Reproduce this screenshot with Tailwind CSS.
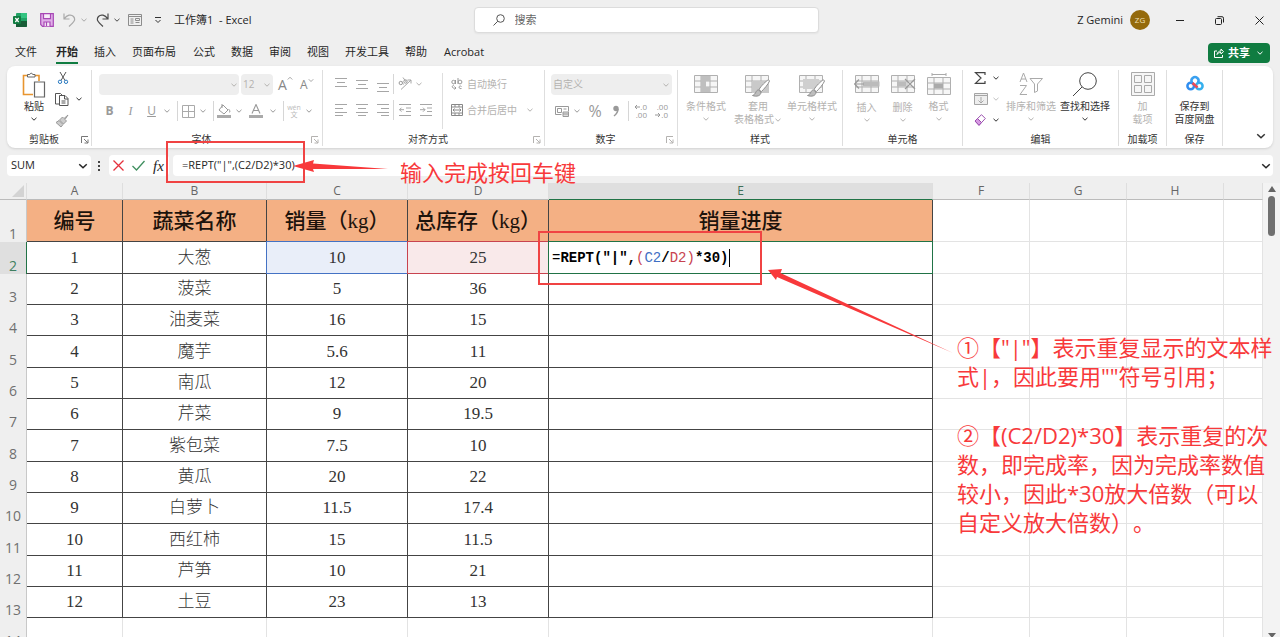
<!DOCTYPE html>
<html lang="zh-CN">
<head>
<meta charset="utf-8">
<meta name="viewport" content="width=device-width, initial-scale=1">
<title>工作簿1 - Excel</title>
<script src="https://cdn.jsdelivr.net/npm/@tailwindcss/browser@4"></script>
</head>
<body class="relative flex h-screen flex-col overflow-hidden bg-[#efefef] font-['Open_Sans','Noto_Sans_CJK_SC',sans-serif] text-[11px] text-[#262626] [text-spacing-trim:space-all]">

<!-- Shared icons -->
<svg class="hidden">
  <symbol id="chev" viewBox="0 0 8 8"><path d="M1.5 2.8 4 5.2 6.500 2.800" fill="none" stroke="currentColor"/></symbol>
  <symbol id="launch" viewBox="0 0 8 8"><path d="M.5 7V.5H7M3 3l4 4M7 3.500V7H3.500" fill="none" stroke="currentColor"/></symbol>
  <symbol id="grid" viewBox="0 0 24 20"><path d="M.5 1.500h23v17H.5zM.5 7h23M.5 13h23M7 1.500v17M16 1.500v17" fill="#f6f6f6" stroke="#b0b0b0"/></symbol>
  <symbol id="brush" viewBox="0 0 18 18"><path d="M16.500.8C14 2 9 7 7 10.500l2.300 2.200C12 10 16.500 5 17.500 2z" fill="#fff" stroke="#8e8e8e"/><path d="M6.500 11c-3 0-2 4-6 5.500 4 1.500 8.500.5 8.500-3.500z" fill="#bdbdbd" stroke="#8e8e8e"/></symbol>
</svg>

<!-- Title bar -->
<header class="flex h-10 shrink-0 items-center">
  <div class="flex flex-1 items-center pl-[13px]">
    <svg class="size-[14px]" viewBox="0 0 14 14"><rect x="3" y="0" width="11" height="14" rx="1" fill="#21a366"/><path d="M8 0h6v5H8z" fill="#33c481"/><path d="M3 8h11v5a1 1 0 0 1-1 1H3z" fill="#185c37"/><rect x="0" y="3" width="8" height="8" rx="1" fill="#107c41"/><path d="m2.300 5 3.400 4M5.700 5 2.300 9" stroke="#fff" stroke-width="1.200"/></svg>
    <button class="ml-[13px]" aria-label="保存"><svg class="size-[14px]" viewBox="0 0 14 14" fill="#e0aee8" stroke="#a748b5" stroke-width="1.200"><path d="M.7.7h12.600v12.600H2.500L.7 11.500z"/><path d="M3.500.7h7v5h-7zM4 13.300V9h6v4.300M6.500 9.500v3.500" fill="#f7ecf8"/></svg></button>
    <button class="ml-[9px] flex items-center gap-1 text-[#a9a9a9]" aria-label="撤销"><svg class="h-[14px] w-[13px]" viewBox="0 0 13 14" fill="none" stroke="currentColor" stroke-width="1.200"><path d="M1 .5V6h5.500M1.300 5.700C4 2 8 .8 10.500 3.500 13 6.500 11.500 8.500 6 13.500"/></svg><svg class="size-2"><use href="#chev"/></svg></button>
    <button class="ml-[8px] flex items-center gap-1 text-[#4a4a4a]" aria-label="恢复"><svg class="h-[14px] w-[13px]" viewBox="0 0 13 14" fill="none" stroke="currentColor" stroke-width="1.200"><path d="M12 .5V6H6.500M11.700 5.700C9 2 5 .8 2.500 3.500 0 6.500 1.500 8.500 7 13.500"/></svg><svg class="size-2"><use href="#chev"/></svg></button>
    <button class="ml-[7px]" aria-label="窗体"><svg class="h-3 w-[14px]" viewBox="0 0 14 12" fill="none" stroke="#8c8c8c"><path d="M.5.5h13v11H.5zM.5 2.500h13M2.500 5h3M2.500 7h3M2.500 9h3M7.500 4.500h4v2h-4zM7.500 8.500h4"/></svg></button>
    <button class="ml-3 text-[#333]" aria-label="自定义快速访问工具栏"><svg class="size-2" viewBox="0 0 8 8" fill="none" stroke="currentColor"><path d="M1 1.500h6M1.500 4 4 6.500 6.500 4"/></svg></button>
    <span class="ml-3">工作簿1 &nbsp;- Excel</span>
  </div>
  <label class="ml-[14px] flex h-[26px] w-[345px] items-center gap-[10px] rounded border border-[#dcdcdc] bg-white px-[18px] text-[#666] shadow-xs">
    <svg class="size-3" viewBox="0 0 12 12" fill="none" stroke="#555"><circle cx="7.500" cy="4.500" r="3.800"/><path d="M4.800 7.200.5 11.500"/></svg>
    <input class="min-w-0 flex-1 text-[11px] outline-none placeholder:text-[#666]" placeholder="搜索" aria-label="搜索">
  </label>
  <div class="flex flex-1 items-center justify-end pr-[15px]">
    <span class="text-[11px]">Z Gemini</span>
    <button class="ml-[7px] size-5 rounded-full bg-[#946a0c] text-[8px] text-[#f0e0b8]">ZG</button>
    <button class="ml-[25px] p-px" aria-label="最小化"><svg class="size-2" viewBox="0 0 8 8" stroke="#222"><path d="M0 4.500h8"/></svg></button>
    <button class="ml-[29px] p-px" aria-label="还原"><svg class="size-[9px]" viewBox="0 0 9 9" fill="none" stroke="#222"><rect x=".5" y="2.500" width="6" height="6" rx="1"/><path d="M2.500.7H7a1.500 1.500 0 0 1 1.500 1.500v4.300"/></svg></button>
    <button class="ml-[29px] p-px" aria-label="关闭"><svg class="size-[9px]" viewBox="0 0 9 9" stroke="#222"><path d="m.5.500 8 8M8.500.5l-8 8"/></svg></button>
  </div>
</header>

<!-- Tabs -->
<nav class="flex h-[26px] shrink-0 items-center pl-[15px] pr-[10px]">
  <div class="flex flex-1 gap-4 [&>a]:leading-5">
    <a href="#" class="mr-[3px]">文件</a><a href="#" class="border-b-2 border-[#107c41] font-bold">开始</a><a href="#">插入</a><a href="#">页面布局</a><a href="#" class="ml-px">公式</a><a href="#">数据</a><a href="#">审阅</a><a href="#">视图</a><a href="#">开发工具</a><a href="#">帮助</a><a href="#" class="ml-px">Acrobat</a>
  </div>
  <button class="flex h-5 items-center rounded bg-[#107c41] px-[6px] text-[11px] font-bold text-white">
    <svg class="mr-1 size-[10px]" viewBox="0 0 10 10" fill="none" stroke="#fff"><path d="M3 3H.5v6.500h8V7M3 6.500C3.500 4 5 3 7 3V1l2.500 2.700L7 6V4.500C5 4.500 4 5 3 6.500z"/></svg>共享<svg class="ml-[6px] size-2"><use href="#chev"/></svg>
  </button>
</nav>

<!-- Ribbon -->
<section class="mx-[7px] flex h-[82px] shrink-0 rounded-lg bg-white pb-[2px] pt-1 text-[10px] leading-[13px] text-[#b4b2b0] shadow [&_svg]:shrink-0 [&>div]:flex [&>div]:flex-col [&>div]:border-r [&>div]:border-[#dedede] [&_h2]:flex-1 [&_h2]:text-center [&_h2]:text-[#333]">

  <div class="w-[85px] text-[#333]">
    <div class="flex h-16">
      <button class="ml-3 flex w-[30px] flex-col items-center pt-[2px]">
        <svg class="h-[26px] w-6" viewBox="0 0 24 26" fill="none"><path d="M17 9V3.500H1.500v19H11" stroke="#e8952f" stroke-width="1.600"/><path d="M5.500 5V2.500h2.300C8 .8 10.500.8 10.700 2.500H13V5z" fill="#fff" stroke="#666"/><path d="M12.500 10h10v15h-10z" fill="#fff" stroke="#666" stroke-width="1.200"/></svg>
        <span class="mt-[2px]">粘贴</span><svg class="mt-[2px] size-2"><use href="#chev"/></svg>
      </button>
      <div class="ml-[6px] flex flex-col gap-2 pt-[2px]">
        <button aria-label="剪切"><svg class="ml-[2px] size-3" viewBox="0 0 12 12" fill="none"><path d="m3 0 5 8.500M9 0 4 8.500" stroke="#555"/><circle cx="3" cy="9.800" r="1.700" stroke="#2a7ac0"/><circle cx="9" cy="9.800" r="1.700" stroke="#2a7ac0"/></svg></button>
        <button class="flex items-center gap-[6px]" aria-label="复制"><svg class="size-[14px]" viewBox="0 0 14 14" fill="none" stroke="#555"><path d="M4.500 12H.5V1.500h5l1.500 1.500M4.500 3.500H10l3 3v7H4.500zM9.500 3.500V7H13M6.500 9h4M6.500 11h4"/></svg><svg class="size-2"><use href="#chev"/></svg></button>
        <button aria-label="格式刷"><svg class="size-[14px]" viewBox="0 0 14 14" fill="#ccc" stroke="#999"><path d="m13 1-4 3.500L7.500 3 4.500 6l4 4 3-3L10 5.500zM4 6.500l-3 2 5 4.500 2-2.500z"/></svg></button>
      </div>
    </div>
    <footer class="flex items-center"><h2>剪贴板</h2><button aria-label="剪贴板设置"><svg class="mr-[2px] size-2 text-[#777]"><use href="#launch"/></svg></button></footer>
  </div>

  <div class="w-[231px]">
    <div class="h-16 pl-[7px] pt-1">
      <div class="flex items-center">
        <button class="flex h-[21px] w-[140px] items-center justify-end rounded bg-[#eeeeee] pr-px" aria-label="字体"><svg class="size-2"><use href="#chev"/></svg></button>
        <button class="ml-[2px] flex h-[21px] w-8 items-center justify-between rounded bg-[#eeeeee] px-[2px]">12<svg class="size-2"><use href="#chev"/></svg></button>
        <button class="ml-[5px] flex w-[18px] text-sm text-[#888]" aria-label="增大字号">A<svg class="size-[6px]" viewBox="0 0 8 8"><path d="M1 6 4 3l3 3" fill="none" stroke="#888"/></svg></button>
        <button class="ml-1 flex w-4 text-xs text-[#888]" aria-label="减小字号">A<svg class="size-[6px]" viewBox="0 0 8 8"><path d="m1 3 3 3 3-3" fill="none" stroke="#888"/></svg></button>
      </div>
      <div class="mt-[6px] flex h-5 items-center text-xs text-[#9a9a9a] [&>button]:flex [&>button]:justify-center">
        <button class="w-[21px] font-bold">B</button><button class="w-[21px] font-['Liberation_Serif',serif] italic">I</button><button class="w-[21px] underline">U</button>
        <button class="w-[10px]" aria-label="下划线"><svg class="size-2"><use href="#chev"/></svg></button>
        <i class="ml-[5px] h-5 w-px bg-[#d6d6d6]"></i>
        <button class="w-5" aria-label="边框"><svg class="size-[13px]" viewBox="0 0 13 13" fill="none" stroke="#aaa"><path d="M.5.500h12v12H.5zM6.500.5v12M.5 6.500h12"/></svg></button>
        <button class="w-[10px]" aria-label="边框选项"><svg class="size-2"><use href="#chev"/></svg></button>
        <i class="ml-[5px] h-5 w-px bg-[#d6d6d6]"></i>
        <button class="w-5" aria-label="填充颜色"><svg class="size-[14px]" viewBox="0 0 14 14" fill="none" stroke="#999"><path d="m6 1 5 5-4 4-5-4zM5 0v4M11.500 5c2 2 1.500 3 .5 3.500"/><path d="M0 11h14v3H0z" fill="#aaa" stroke="none"/></svg></button>
        <button class="w-[10px]" aria-label="填充选项"><svg class="size-2"><use href="#chev"/></svg></button>
        <button class="w-6" aria-label="字体颜色"><svg class="size-[14px]" viewBox="0 0 14 14" fill="none" stroke="#999" stroke-width="1.100"><path d="M3 9.500 7 .5l4 9M4.500 6.500h5"/><path d="M0 11h14v3H0z" fill="#aaa" stroke="none"/></svg></button>
        <button class="w-[10px]" aria-label="颜色选项"><svg class="size-2"><use href="#chev"/></svg></button>
        <i class="ml-[5px] h-5 w-px bg-[#d6d6d6]"></i>
        <button class="w-5 flex-col items-center text-[7px] leading-[7px] text-[#bbb]"><span>wén</span><span>文</span></button>
        <button class="w-[10px]" aria-label="拼音选项"><svg class="size-2"><use href="#chev"/></svg></button>
      </div>
    </div>
    <footer class="flex items-center"><h2>字体</h2><button aria-label="字体设置"><svg class="mr-[3px] size-2"><use href="#launch"/></svg></button></footer>
  </div>

  <div class="w-[222px]">
    <div class="flex h-16 pl-[7px] pt-[3px]">
      <div class="h-14 w-[113px] border-r border-[#dedede]">
        <div class="flex h-[22px] items-center [&>button]:flex [&>button]:w-[21px] [&>button]:justify-center [&_path]:stroke-[#a6a6a6] [&_circle]:stroke-[#999]">
          <button aria-label="顶端对齐"><svg class="h-4 w-3" viewBox="0 0 12 16"><path d="M0 2.500h12M2 6.500h8M0 10.500h12"/></svg></button>
          <button aria-label="垂直居中"><svg class="h-4 w-3" viewBox="0 0 12 16"><path d="M0 4.500h12M2 8.500h8M0 12.500h12"/></svg></button>
          <button aria-label="底端对齐"><svg class="h-4 w-3" viewBox="0 0 12 16"><path d="M0 7.500h12M2 11.500h8M0 15.500h12"/></svg></button>
          <i class="h-5 w-px bg-[#d6d6d6]"></i>
          <button aria-label="方向"><svg class="size-[14px]" viewBox="0 0 14 14" fill="none"><path d="M3 12.500 13 3M9.500 3H13v3.500"/><circle cx="2.800" cy="6" r="1.700"/><circle cx="7.500" cy="4.500" r="1.700"/><path d="m3.500 4 2 3.500M5 .5l3.500 5"/></svg></button>
          <svg class="size-2"><use href="#chev"/></svg>
        </div>
        <div class="mt-1 flex h-[22px] items-center [&>button]:flex [&>button]:w-[21px] [&>button]:justify-center [&_path]:stroke-[#a6a6a6]">
          <button aria-label="左对齐"><svg class="size-3" viewBox="0 0 12 12"><path d="M0 .5h12M0 4.500h8M0 8.500h12M0 11.500h8"/></svg></button>
          <button aria-label="居中"><svg class="size-3" viewBox="0 0 12 12"><path d="M0 .5h12M2 4.500h8M0 8.500h12M2 11.500h8"/></svg></button>
          <button aria-label="右对齐"><svg class="size-3" viewBox="0 0 12 12"><path d="M0 .5h12M4 4.500h8M0 8.500h12M4 11.500h8"/></svg></button>
          <i class="h-5 w-px bg-[#d6d6d6]"></i>
          <button aria-label="减少缩进"><svg class="size-3" viewBox="0 0 12 12" fill="none"><path d="M0 .5h12M7 4h5M7 7.500h5M0 11.500h12M5 5.700H.5M2.500 3.700l-2 2 2 2"/></svg></button>
          <button aria-label="增加缩进"><svg class="size-3" viewBox="0 0 12 12" fill="none"><path d="M0 .5h12M7 4h5M7 7.500h5M0 11.500h12M0 5.700h5M3 3.700l2 2-2 2"/></svg></button>
        </div>
      </div>
      <div class="pl-2">
        <button class="flex h-[22px] items-center gap-1"><svg class="size-3" viewBox="0 0 12 12" fill="none" stroke="#999"><circle cx="2.500" cy="4" r="1.700"/><path d="M4.500 2v4M7 0v6M10.500 8.500c-3-2-3.500 3 0 2M3 7c-3 1-2 4 2 3M3.500 8.500 5 10l-1.500 1.500"/><circle cx="9" cy="4" r="1.900"/></svg>自动换行</button>
        <button class="mt-1 flex h-[22px] items-center gap-1"><svg class="size-3" viewBox="0 0 12 12" fill="none" stroke="#888"><path d="M.5.500h11v11H.5zM.5 3h11M.5 9h11M4 .5V3M8 .5V3M4 9v2.500M8 9v2.500M2 6h8M3.500 4.500 2 6l1.500 1.500M8.500 4.500 10 6 8.500 7.500"/></svg>合并后居中<svg class="ml-[5px] size-2"><use href="#chev"/></svg></button>
      </div>
    </div>
    <footer class="flex items-center"><h2>对齐方式</h2><button aria-label="对齐设置"><svg class="mr-[3px] size-2"><use href="#launch"/></svg></button></footer>
  </div>

  <div class="w-[133px]">
    <div class="h-16 pl-[6px] pt-1">
      <button class="flex h-[21px] w-[121px] items-center justify-between rounded bg-[#eeeeee] px-[2px]">自定义<svg class="size-2"><use href="#chev"/></svg></button>
      <div class="mt-[6px] flex h-5 items-center text-[#999] [&>button]:flex [&>button]:justify-center">
        <button class="w-[21px]" aria-label="会计格式"><svg class="h-3 w-[14px]" viewBox="0 0 14 12" fill="none" stroke="#999"><path d="M.5 1.500h13v5M.5 1.500v8h6M2.500 3.500h4v4h-4zM8.500 4h3"/><path d="M8 7h5.500v4.500H8zM8 9h5.500" fill="#ddd"/></svg></button>
        <button class="w-[10px]" aria-label="会计选项"><svg class="size-2"><use href="#chev"/></svg></button>
        <button class="w-[26px] text-base leading-5">%</button>
        <button class="w-4" aria-label="千位分隔"><svg class="h-3 w-2" viewBox="0 0 8 12"><circle cx="4" cy="3.500" r="2.700" fill="#999"/><path d="M6 4C6 7 4.500 9 2 11" fill="none" stroke="#999" stroke-width="1.500"/></svg></button>
        <i class="ml-1 h-5 w-px bg-[#d6d6d6]"></i>
        <button class="w-[22px] flex-col items-end pr-1 text-[8px] leading-[8px]"><span class="flex items-center"><svg class="size-[6px]" viewBox="0 0 6 6" fill="none" stroke="#999"><path d="M6 3H1M3 1 1 3l2 2"/></svg>.0</span><span>.00</span></button>
        <button class="w-[21px] flex-col items-end pr-1 text-[8px] leading-[8px]"><span>.00</span><span class="flex items-center"><svg class="size-[6px]" viewBox="0 0 6 6" fill="none" stroke="#999"><path d="M0 3h5M3 1l2 2-2 2"/></svg>.0</span></button>
      </div>
    </div>
    <footer class="flex items-center"><h2>数字</h2><button aria-label="数字设置"><svg class="mr-[3px] size-2"><use href="#launch"/></svg></button></footer>
  </div>

  <div class="w-[165px]">
    <div class="flex h-16 pl-[2px] pt-[3px] [&>button]:flex [&>button]:w-[52px] [&>button]:flex-col [&>button]:items-center">
      <button><svg class="mb-[3px] h-6 w-6" viewBox="0 -1 24 24"><use href="#grid" width="24" height="20"/><path d="M7 2h9v5H7zM7 7h5v6H7zM7 13h9v5H7z" fill="#bfbfbf"/></svg>条件格式<svg class="mt-[2px] size-2"><use href="#chev"/></svg></button>
      <button><svg class="mb-[3px] h-6 w-[26px]" viewBox="0 -1 26 24"><use href="#grid" width="24" height="20"/><path d="M7 7h17v12H7z" fill="#c9c9c9"/><use href="#brush" x="7" y="5" width="18" height="18"/></svg>套用<span class="flex items-center whitespace-nowrap">表格格式<svg class="size-2"><use href="#chev"/></svg></span></button>
      <button class="ml-[2px] whitespace-nowrap"><svg class="mb-[3px] h-6 w-[26px]" viewBox="0 -1 26 24"><use href="#grid" width="24" height="20"/><path d="M4 5h16v10H4z" fill="#cfcfcf"/><use href="#brush" x="8" y="5" width="18" height="18"/></svg>单元格样式<svg class="mt-[2px] size-2"><use href="#chev"/></svg></button>
    </div>
    <footer class="flex items-center"><h2>样式</h2></footer>
  </div>

  <div class="w-[120px]">
    <div class="flex h-16 justify-center pt-[3px] [&>button]:flex [&>button]:w-9 [&>button]:flex-col [&>button]:items-center">
      <button><svg class="mb-1 h-6 w-[26px]" viewBox="0 -1 26 24"><use href="#grid" x="1" width="24" height="20"/><path d="M9 7.500h16.500v5H9z" fill="#bbb"/><path d="M10 10H1M5 5.500.7 10 5 14.500" fill="none" stroke="#999" stroke-width="1.200"/></svg>插入<svg class="mt-[2px] size-2"><use href="#chev"/></svg></button>
      <button><svg class="mb-1 h-6 w-[26px]" viewBox="0 -1 26 24"><use href="#grid" x="1" width="24" height="20"/><path d="M7 7.500h9v5H7z" fill="#bbb"/><path d="m15 5 10 10M25 5 15 15" stroke="#999" stroke-width="1.200"/></svg>删除<svg class="mt-[2px] size-2"><use href="#chev"/></svg></button>
      <button><svg class="mb-[3px] h-6 w-6" viewBox="0 -3 24 24"><use href="#grid" width="24" height="20"/><path d="M7 7.500h9v5H7z" fill="#aaa"/><path d="M5-1.500h14M5-3v3M19-3v3" stroke="#aaa"/></svg>格式<svg class="mt-[2px] size-2"><use href="#chev"/></svg></button>
    </div>
    <footer class="flex items-center"><h2>单元格</h2></footer>
  </div>

  <div class="w-[156px]">
    <div class="flex h-16 pl-[11px] pt-[2px]">
      <div class="flex w-[30px] flex-col gap-[9px] [&>button]:flex [&>button]:items-center [&>button]:justify-between [&>button]:pr-1 [&_svg]:text-[#333]">
        <button aria-label="自动求和"><svg class="size-3" viewBox="0 0 12 12" fill="none" stroke="#444" stroke-width="1.200"><path d="M11 3V.7H1.500L7 6l-5.500 5.300H11V9"/></svg><svg class="size-2"><use href="#chev"/></svg></button>
        <button aria-label="填充"><svg class="h-3 w-[14px]" viewBox="0 0 14 12" fill="#eee" stroke="#a5a5a5"><path d="M.5.500h13v11H.5zM.5 2.500h13M7 4v6M4.500 7.500 7 10l2.500-2.500"/></svg><svg class="size-2 opacity-30"><use href="#chev"/></svg></button>
        <button aria-label="清除"><svg class="size-3" viewBox="0 0 12 12" fill="#fff" stroke="#9a4fae"><path d="M7.500.7 11.300 4.500 5 11.300 1 7z"/><path d="m3.500 4.500 4 4L5 11.300 1 7z" fill="#d79ae3"/></svg><svg class="size-2"><use href="#chev"/></svg></button>
      </div>
      <button class="flex w-[54px] flex-col items-center whitespace-nowrap"><svg class="mb-1 h-6 w-6" viewBox="0 0 24 24" fill="none" stroke="#aaa"><path d="m1 10 3.500-9L8 10M2 7h5M1 13.500h6.500L1 22.500h7M11 6.500h12.500L18.500 12v7l-3 1.500V12z"/></svg>排序和筛选<svg class="mt-[2px] size-2"><use href="#chev"/></svg></button>
      <button class="flex w-[54px] flex-col items-center whitespace-nowrap text-[#333]"><svg class="mb-1 h-6 w-6" viewBox="0 0 24 24" fill="none" stroke="#444"><circle cx="15" cy="9" r="8.300"/><path d="M9 15 0 24"/></svg>查找和选择<svg class="mt-[2px] size-2"><use href="#chev"/></svg></button>
    </div>
    <footer class="flex items-center"><h2>编辑</h2></footer>
  </div>

  <div class="w-12">
    <div class="flex h-16 justify-center pt-[2px]">
      <button class="flex w-10 flex-col items-center"><svg class="mb-1 h-6 w-6" viewBox="0 0 24 24" fill="#f6f6f6" stroke="#aaa"><path d="M.5.500h23v23H.5zM3.500 3.500h7v7h-7zM13.500 3.500h7v7h-7zM3.500 13.500h7v7h-7zM13.500 13.500h7v7h-7z"/></svg>加<br>载项</button>
    </div>
    <footer class="flex items-center"><h2>加载项</h2></footer>
  </div>

  <div class="w-14">
    <div class="flex h-16 justify-center pt-[2px] text-[#333]">
      <button class="flex flex-col items-center"><svg class="mb-1 h-6 w-[18px]" viewBox="0 0 18 24" fill="none" stroke-width="2.500"><circle cx="4.700" cy="14" r="3.300" stroke="#2f8df0"/><circle cx="13.300" cy="14" r="3.300" stroke="#35b0ee"/><path d="M6 10.500a3.500 3.500 0 1 1 6 0" stroke="#3aa0f0"/><path d="m6.500 11 5 4.500" stroke="#ee4a56"/></svg>保存到<br>百度网盘</button>
    </div>
    <footer class="flex items-center"><h2>保存</h2></footer>
  </div>

  <button class="flex flex-1 items-end justify-end pb-1 pr-[6px] text-[#333]" aria-label="折叠功能区"><svg class="size-3"><use href="#chev"/></svg></button>
</section>

<!-- Formula bar -->
<section class="flex h-[35px] shrink-0 items-center pl-[7px] pr-[7px]">
  <div class="flex h-[21px] w-[84px] items-center rounded bg-white pl-1 pr-[2px]"><input class="min-w-0 flex-1 text-[11px] outline-none" value="SUM" aria-label="名称框"><button aria-label="名称列表"><svg class="size-3"><use href="#chev"/></svg></button></div>
  <svg class="ml-[7px] h-3 w-[3px]" viewBox="0 0 3 12" fill="#444"><path d="M0 1h2v2H0zM0 5h2v2H0zM0 9h2v2H0z"/></svg>
  <div class="ml-2 flex h-[21px] w-[60px] items-center gap-2 rounded bg-white pl-1">
    <button aria-label="取消"><svg class="size-[11px]" viewBox="0 0 11 11"><path d="m.5.500 10 10M10.500.5l-10 10" fill="none" stroke="#e5303c" stroke-width="1.300"/></svg></button>
    <button aria-label="输入"><svg class="h-[11px] w-[13px]" viewBox="0 0 13 11"><path d="M.5 6 4.500 10 12.500 1" fill="none" stroke="#3f8f5f" stroke-width="1.300"/></svg></button>
    <button class="font-['Liberation_Serif',serif] text-[15px] italic leading-4">fx</button>
  </div>
  <div class="ml-1 flex h-[21px] flex-1 items-center rounded bg-white pl-[9px] pr-px"><input class="min-w-0 flex-1 text-[11px] outline-none" value='=REPT("|",(C2/D2)*30)' aria-label="编辑栏"><button aria-label="展开编辑栏"><svg class="size-3"><use href="#chev"/></svg></button></div>
</section>

<!-- Sheet -->
<main class="flex min-h-0 flex-1 overflow-hidden">
  <div class="min-w-0 flex-1 overflow-hidden">
  <table class="w-full table-fixed border-separate border-spacing-0 text-center font-['Liberation_Serif','Noto_Sans_CJK_SC',serif] text-[17px] font-light leading-5 text-[#333] [&_td]:border-b [&_td]:border-r [&_td]:border-[#e3e3e3] [&_td]:p-0 [&_td:nth-child(-n+6)]:border-[#444] [&_tbody_th]:border-r [&_tbody_th]:border-[#c8c8c8] [&_tbody_th]:p-0 [&_tbody_th]:align-bottom [&_tbody_th]:font-['Open_Sans',sans-serif] [&_tbody_th]:text-sm [&_tbody_th]:font-normal [&_tbody_th]:leading-4 [&_tbody_th]:text-[#707070]">
    <colgroup><col class="w-[27px]"><col class="w-24"><col class="w-36"><col class="w-[141px]"><col class="w-[141px]"><col class="w-96"><col class="w-[97px]"><col class="w-[97px]"><col class="w-[97px]"><col></colgroup>
    <thead class="font-['Open_Sans',sans-serif] text-xs leading-4 text-[#666] [&_th]:h-4 [&_th]:border-b [&_th]:border-r [&_th]:border-b-[#bbb] [&_th]:border-r-[#dedede] [&_th]:p-0 [&_th]:font-normal">
      <tr><th aria-label="全选"><svg class="ml-3 size-3" viewBox="0 0 12 12"><path d="M12 0v12H0z" fill="#d3d3d3"/></svg></th><th>A</th><th>B</th><th>C</th><th>D</th><th class="border-b-[#217346]! bg-[#dfdfdf] text-[#3f6f58]">E</th><th>F</th><th>G</th><th>H</th><th></th></tr>
    </thead>
    <tbody class="bg-white [&_th]:bg-[#efefef]">
      <tr class="h-[42px] text-[21px] font-medium text-[#1d130c] [&>td:nth-child(-n+6)]:bg-[#f4b084]"><th>1</th><td>编号</td><td>蔬菜名称</td><td class="whitespace-nowrap">销量（kg）</td><td class="whitespace-nowrap">总库存（kg）</td><td>销量进度</td><td></td><td></td><td></td><td></td></tr>
      <tr class="h-8"><th class="border-[#217346]! bg-[#dfdfdf]! text-[#3f7f60]!">2</th><td>1</td><td>大葱</td>
        <td class="relative bg-[#e9eef9]">10<span class="absolute -left-px -right-px -top-px bottom-[-1px] z-10 border border-[#4472c4]"></span></td>
        <td class="relative bg-[#f9e9ea]">25<span class="absolute -inset-px z-20 border border-[#c8434f]"></span></td>
        <td class="relative whitespace-nowrap pl-[3px]! text-left font-['Liberation_Mono',monospace] text-sm font-bold text-black"><span class="absolute -inset-px z-30 border border-[#217346]"></span><span class="font-normal">=</span>REPT("|",<span class="font-normal text-[#c8434f]">(</span><span class="font-normal text-[#3f6fc4]">C2</span>/<span class="font-normal text-[#c8434f]">D2)</span>*30)<span class="ml-px inline-block h-[18px] w-px bg-black align-middle"></span></td><td></td><td></td><td></td><td></td></tr>
      <tr class="h-[31px]"><th>3</th><td>2</td><td>菠菜</td><td>5</td><td>36</td><td></td><td></td><td></td><td></td><td></td></tr>
      <tr class="h-[31px]"><th>4</th><td>3</td><td>油麦菜</td><td>16</td><td>15</td><td></td><td></td><td></td><td></td><td></td></tr>
      <tr class="h-8"><th>5</th><td>4</td><td>魔芋</td><td>5.6</td><td>11</td><td></td><td></td><td></td><td></td><td></td></tr>
      <tr class="h-[31px]"><th>6</th><td>5</td><td>南瓜</td><td>12</td><td>20</td><td></td><td></td><td></td><td></td><td></td></tr>
      <tr class="h-[31px]"><th>7</th><td>6</td><td>芹菜</td><td>9</td><td>19.5</td><td></td><td></td><td></td><td></td><td></td></tr>
      <tr class="h-8"><th>8</th><td>7</td><td>紫包菜</td><td>7.5</td><td>10</td><td></td><td></td><td></td><td></td><td></td></tr>
      <tr class="h-[31px]"><th>9</th><td>8</td><td>黄瓜</td><td>20</td><td>22</td><td></td><td></td><td></td><td></td><td></td></tr>
      <tr class="h-[31px]"><th>10</th><td>9</td><td>白萝卜</td><td>11.5</td><td>17.4</td><td></td><td></td><td></td><td></td><td></td></tr>
      <tr class="h-8"><th>11</th><td>10</td><td>西红柿</td><td>15</td><td>11.5</td><td></td><td></td><td></td><td></td><td></td></tr>
      <tr class="h-[31px]"><th>12</th><td>11</td><td>芦笋</td><td>10</td><td>21</td><td></td><td></td><td></td><td></td><td></td></tr>
      <tr class="h-[31px]"><th>13</th><td>12</td><td>土豆</td><td>23</td><td>13</td><td></td><td></td><td></td><td></td><td></td></tr>
      <tr class="h-[31px] [&>td]:border-[#e3e3e3]!"><th>14</th><td></td><td></td><td></td><td></td><td></td><td></td><td></td><td></td><td></td></tr>
    </tbody>
  </table>
  </div>
  <div class="flex w-[17px] flex-col items-center gap-1 bg-[#f3f3f3] pt-[3px]">
    <svg class="h-[6px] w-2" viewBox="0 0 8 6"><path d="M4 0l4 6H0z" fill="#666"/></svg>
    <div class="h-[40px] w-[7px] rounded-full bg-[#707070]"></div>
    <svg class="mt-auto h-1 w-2" viewBox="0 0 8 4"><path d="M0 0h8L4 5z" fill="#666"/></svg>
  </div>
</main>

<!-- Red annotations over the sheet -->
<svg class="pointer-events-none absolute left-0 top-0 z-40 h-[637px] w-[1280px]" viewBox="0 0 1280 637">
  <g fill="none" stroke="#f04343" stroke-width="2"><rect x="167" y="142" width="137" height="40"/><rect x="539" y="232" width="222" height="52"/></g>
  <g fill="#f8393b"><path d="m293 166 21-6-1 3.500 75 5.500-75 0 1 3z"/><path d="m768 270 14-1-1.500 4L953 353 777 277l-1 3z"/></g>
</svg>
<p class="absolute left-[400px] top-[158px] text-[22px] leading-[29px] text-[#f8393b]">输入完成按回车键</p>
<div class="absolute left-[957px] top-[333px] flex flex-col gap-[30px] whitespace-nowrap text-[22px] leading-[29px] text-[#f8393b]">
  <p>①【"|"】表示重复显示的文本样<br>式|，因此要用""符号引用；</p>
  <p>②【(C2/D2)*30】表示重复的次<br>数，即完成率，因为完成率数值<br>较小，因此*30放大倍数（可以<br>自定义放大倍数）。</p>
</div>
</body>
</html>
